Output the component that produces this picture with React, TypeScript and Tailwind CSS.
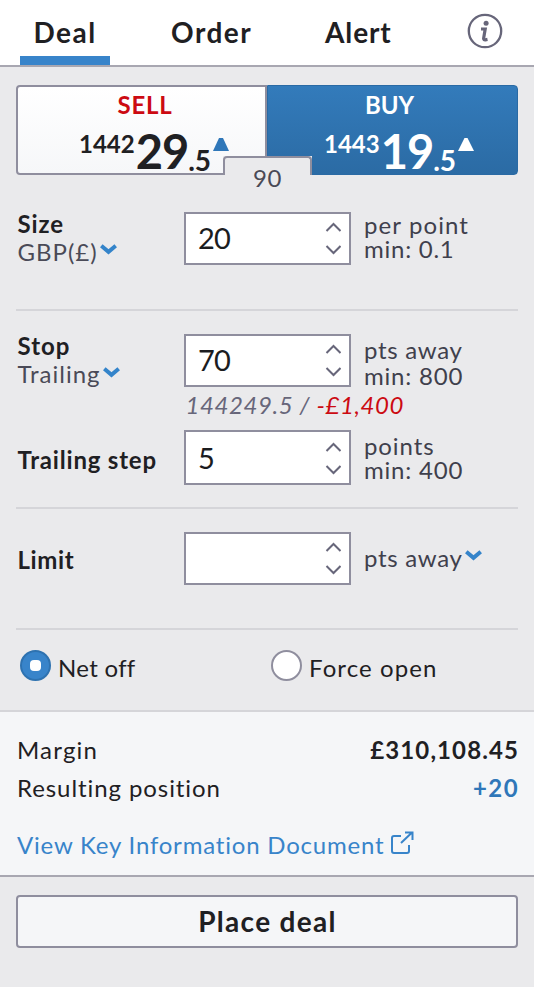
import React from "react";

function Stepper({ value, className }: { value: string; className: string }) {
  return (
    <div className={`flex w-[167px] items-center justify-between border-2 border-[#8f8e9e] bg-white pl-[12px] pr-[8px] ${className}`}>
      <span className="-mt-px text-[29px] leading-[34px] tracking-[-0.8px] text-[#1b1c1f]">{value}</span>
      <svg width="16" height="49" viewBox="0 0 16 49" fill="none" stroke="#67667a" strokeWidth="2" className="shrink-0">
        <path d="M1.5 17 L8.5 10 L15.5 17" />
        <path d="M1.5 32 L8.5 39 L15.5 32" />
      </svg>
    </div>
  );
}

function Caret({ className }: { className: string }) {
  return (
    <svg width="17" height="11" viewBox="0 0 17 11" fill="none" stroke="#3484ca" strokeWidth="4" className={`shrink-0 ${className}`}>
      <path d="M1.3 1.8 L8.5 7.8 L15.7 1.8" />
    </svg>
  );
}

function Row({ children, className }: { children: React.ReactNode; className: string }) {
  return <div className={`grid grid-cols-[166.5px_180px_1fr] items-start ${className}`}>{children}</div>;
}

export default function App() {
  return (
    <div className="flex h-[987px] w-[534px] flex-col overflow-hidden bg-[#eaeaec] font-['Lato','Noto_Sans',sans-serif] text-[24px] leading-[28px] text-[#1f2023]">
      <header className="flex h-[67px] shrink-0 border-b-2 border-[#a8a7b1] bg-white text-[28px] font-bold leading-[34px]">
        <div className="ml-[20px] flex h-[65px] w-[90px] flex-col justify-between pt-[15px]">
          <span className="text-center tracking-[1.5px]">Deal</span>
          <span className="h-[9px] bg-[#3884ca]" />
        </div>
        <span className="ml-[61px] w-[82px] pt-[15px] tracking-[1.5px]">Order</span>
        <span className="ml-[72px] w-[70px] pt-[15px] tracking-[0.9px]">Alert</span>
        <svg width="36" height="36" viewBox="0 0 36 36" className="ml-[72px] mt-[13px]" fill="none" stroke="#67667a">
          <circle cx="18" cy="18" r="16.2" strokeWidth="2.3" />
          <circle cx="19.1" cy="10.3" r="2.5" fill="#67667a" stroke="none" />
          <path d="M14 16 H18.2 L16.6 25.6 Q16.6 27 18.4 26.8 L20.5 26.4" strokeWidth="3.2" />
        </svg>
      </header>

      <div className="relative mx-[16px] mt-[18px] flex h-[90px] w-[502px] shrink-0">
        <div className="w-[251px] rounded-l-[4px] border-2 border-[#8f8e9e] bg-linear-to-b from-white to-[#f6f7f9]">
          <div className="pl-[99.5px] pt-[4px] font-bold leading-[28px] tracking-[0.8px] text-[#cc0a12]">SELL</div>
          <div className="flex items-baseline pl-[61px] pt-[10px] leading-[44px] font-bold">
            <span className="relative -top-[16px]">1442</span>
            <span className="ml-[1px] text-[47px] tracking-[-1px]">29</span>
            <span className="relative top-[2px] text-[28px]">.5</span>
            <svg width="16" height="13" viewBox="0 0 16 13" className="relative -top-[18px] ml-[2px] fill-[#2f77b9]"><path d="M6 0 H10 L16 13 H0 Z" /></svg>
          </div>
        </div>
        <div className="w-[251px] rounded-r-[4px] border border-[#2a6aa4] bg-linear-to-b from-[#337bbb] to-[#2b6ba4] text-white">
          <div className="pl-[97px] pt-[5px] font-bold leading-[28px]">BUY</div>
          <div className="flex items-baseline pl-[56px] pt-[10px] leading-[44px] font-bold">
            <span className="relative -top-[16px]">1443</span>
            <span className="ml-[1px] text-[47px] tracking-[-1px]">19</span>
            <span className="relative top-[2px] text-[28px]">.5</span>
            <svg width="16" height="13" viewBox="0 0 16 13" className="relative -top-[18px] ml-[2px] fill-white"><path d="M6.5 0 H9.5 L16 13 H0 Z" /></svg>
          </div>
        </div>
        <div className="absolute left-[207px] top-[71px] h-[34px] w-[89px] bg-[#eaeaec]">
          <div className="h-[19px] rounded-t-[4px] border-2 border-b-0 border-[#8f8e9e] pt-[6px] text-center leading-[28px] tracking-[0.5px] text-[#4a4a57]">90</div>
        </div>
      </div>

      <Row className="mx-[16px] h-[136px] shrink-0 border-b-2 border-[#d5d5d9] pl-[1.5px]">
        <div className="pt-[35px]">
          <div className="font-bold leading-[28px] tracking-[0.9px]">Size</div>
          <div className="flex text-[#4a4a57]"><span className="tracking-[1px]">GBP(£)</span><Caret className="mt-[6px] ml-[2.5px]" /></div>
        </div>
        <Stepper value="20" className="mt-[37px] h-[53px]" />
        <div className="pt-[38px] leading-[24px] text-[#3f404c]"><div className="tracking-[1.1px]">per point</div><div className="tracking-[0.75px]">min: 0.1</div></div>
      </Row>

      <div className="mx-[16px] h-[198px] shrink-0 border-b-2 border-[#d5d5d9] pl-[1.5px]">
        <Row className="h-[76px]">
          <div className="pt-[21px]">
            <div className="font-bold tracking-[1px]">Stop</div>
            <div className="flex text-[#4a4a57]"><span className="tracking-[1px]">Trailing</span><Caret className="mt-[7px] ml-[2px]" /></div>
          </div>
          <Stepper value="70" className="mt-[23px] h-[53px]" />
          <div className="pt-[26px] leading-[26px] text-[#3f404c]"><div className="tracking-[0.7px]">pts away</div><div className="tracking-[0.8px]">min: 800</div></div>
        </Row>
        <div className="h-[43px] pl-[168px] italic leading-[35px] text-[#67667a]"><span className="tracking-[0.6px]">144249.5 / </span><span className="tracking-[0.6px] text-[#cc0a12]">-£1,400</span></div>
        <Row className="">
          <div className="pt-[16px] font-bold tracking-[0.8px]">Trailing step</div>
          <Stepper value="5" className="h-[55px] pt-px" />
          <div className="pt-[4px] leading-[24px] text-[#3f404c]"><div className="tracking-[0.9px]">points</div><div className="tracking-[0.8px]">min: 400</div></div>
        </Row>
      </div>

      <Row className="mx-[16px] h-[121px] shrink-0 border-b-2 border-[#d5d5d9] pl-[1.5px]">
        <div className="pt-[37px] font-bold tracking-[0.6px]">Limit</div>
        <Stepper value="" className="mt-[23px] h-[53px]" />
        <div className="flex pt-[35px] text-[#3f404c]"><span className="tracking-[0.7px]">pts away</span><Caret className="mt-[6px] ml-[2.5px]" /></div>
      </Row>

      <div className="flex h-[80px] shrink-0 pl-[20px] pt-[20px]">
        <span className="flex h-[31px] w-[31px] items-center justify-center rounded-full border-2 border-[#2e72b0] bg-[#3884ca]"><span className="h-[11px] w-[11px] rounded-[4px] bg-white" /></span>
        <span className="ml-[7px] w-[213px] pt-[4px] tracking-[0.3px]">Net off</span>
        <span className="h-[31px] w-[31px] rounded-full border-2 border-[#8f8e9e] bg-white" />
        <span className="ml-[7px] pt-[4px] tracking-[1.1px]">Force open</span>
      </div>

      <div className="h-[167px] shrink-0 border-y-2 border-t-[#d5d5d9] border-b-[#a8a7b1] bg-[#f5f6f8] pl-[17px] pr-[15px] pt-[24px]">
        <div className="flex justify-between"><span className="tracking-[1.2px]">Margin</span><span className="font-bold tracking-[1.1px]">£310,108.45</span></div>
        <div className="mt-[10px] flex justify-between"><span className="tracking-[0.92px]">Resulting position</span><span className="font-bold tracking-[1.4px] text-[#2f77b9]">+20</span></div>
        <div className="mt-[29px] flex text-[#3884ca]">
          <span className="tracking-[0.8px]">View Key Information Document</span>
          <svg width="24" height="24" viewBox="0 0 24 24" fill="none" stroke="#3884ca" strokeWidth="2" className="ml-[6px]"><path d="M11 5 H4 Q2 5 2 7 V20 Q2 22 4 22 H17 Q19 22 19 20 V14" /><path d="M11 12 L22 1.5 M15 1.5 H22.5 V9" /></svg>
        </div>
      </div>

      <button className="mx-[16px] mt-[18px] h-[53px] shrink-0 rounded-[4px] border-2 border-[#8f8e9e] bg-[#f5f6f8] pb-[2px] pl-px text-[28px] font-bold leading-[34px] tracking-[1.3px]">Place deal</button>
    </div>
  );
}
